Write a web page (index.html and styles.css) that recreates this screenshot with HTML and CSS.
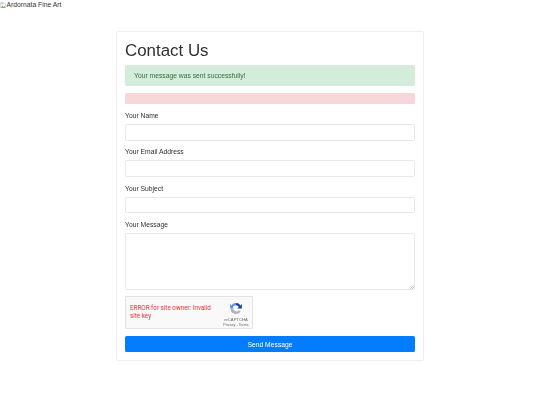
FILE: index.html
```html
<!DOCTYPE html>
<html lang="en">
<head>
<meta charset="utf-8">
<title>Contact Us</title>
<link rel="stylesheet" href="styles.css">
</head>
<body>
<header class="logo">
  <svg class="broken" viewBox="0 0 16 16" aria-hidden="true"><path d="M1 1h9l4 4v10H1z" fill="#fff" stroke="#a9a9a9"/><path d="M2 14l4-5 3 3 2-2 2 4z" fill="#5a9e4b"/><path d="M2 2h7v4H2z" fill="#b9d3f2"/></svg>
  <span class="logo-alt">Ardornata Fine Art</span>
</header>
<main class="card">
  <h1>Contact Us</h1>
  <div class="alert success">Your message was sent successfully!</div>
  <div class="alert danger"></div>
  <form class="form">
    <div class="group">
      <label for="name">Your Name</label>
      <input id="name" type="text">
    </div>
    <div class="group">
      <label for="email">Your Email Address</label>
      <input id="email" type="text">
    </div>
    <div class="group">
      <label for="subject">Your Subject</label>
      <input id="subject" type="text">
    </div>
    <div class="group">
      <label for="message">Your Message</label>
      <textarea id="message"></textarea>
    </div>
    <div class="captcha">
      <p class="captcha-error">ERROR for site owner: Invalid site key</p>
      <div class="captcha-brand">
        <svg class="captcha-logo" viewBox="0 0 20 20" aria-hidden="true">
          <path d="M10 1.5a8.500 8.500 0 0 1 7 3.700L19 3v7h-7l2.400-2.400A5 5 0 0 0 10 5z" fill="#1c3aa9"/>
          <path d="M10 1.500A8.500 8.500 0 0 0 3 5.200L1 3v7h5.500L5 8a5 5 0 0 1 5-3z" fill="#4a90e2"/>
          <path d="M1.500 10a8.500 8.500 0 0 0 15.600 4.700L14.500 12.500A5 5 0 0 1 6 11.500V10z" fill="#b0b3b8"/>
        </svg>
        <span class="captcha-name">reCAPTCHA</span>
        <span class="captcha-links">Privacy - Terms</span>
      </div>
    </div>
    <button class="send" type="button">Send Message</button>
  </form>
</main>
</body>
</html>
```

FILE: styles.css
```css
* {
  box-sizing: border-box;
}

html, body {
  margin: 0;
  background: #fff;
}

body {
  font-family: "Liberation Sans", Arial, sans-serif;
  color: #212529;
  font-size: 6.750px;
  height: 405px;
  overflow: hidden;
}

.logo {
  display: flex;
  align-items: center;
  height: 10px;
  line-height: 10px;
  color: #333;
}

.logo-alt {
  opacity: 0.99;
}

.broken {
  width: 6.500px;
  height: 6.500px;
  flex: none;
}

.card {
  width: 308px;
  height: 330px;
  margin: 21px 0 0 116px;
  padding: 8px;
  border: 1px solid #efefef;
  border-radius: 2px;
  display: flex;
  flex-direction: column;
  opacity: 0.99;
}

.card > * {
  flex: none;
}

h1 {
  margin: 0;
  height: 25px;
  font-size: 16.900px;
  line-height: 22px;
  font-weight: 400;
  color: #2b2f33;
}

.alert {
  border-radius: 1.500px;
}

.success {
  height: 21px;
  margin-bottom: 7px;
  padding-left: 9px;
  line-height: 21px;
  background: #d4edda;
  color: #2f6b3e;
}

.danger {
  height: 10.500px;
  margin-bottom: 7.500px;
  background: #f8d7da;
}

.form {
  display: flex;
  flex-direction: column;
}

.group {
  display: flex;
  flex-direction: column;
  margin-bottom: 6.750px;
}

label {
  height: 13px;
  line-height: 9px;
  color: #2b2f33;
}

input, textarea {
  display: block;
  width: 100%;
  height: 16.500px;
  padding: 0;
  border: 1px solid #e8e9eb;
  border-radius: 1.500px;
  background: #fff;
}

textarea {
  height: 57px;
}

textarea::-webkit-resizer {
  background: linear-gradient(135deg, transparent 55%, #c4c4c4 55%, #c4c4c4 65%, transparent 65%, transparent 78%, #c4c4c4 78%, #c4c4c4 88%, transparent 88%) right bottom / 5px 5px no-repeat;
}

.captcha {
  display: flex;
  justify-content: space-between;
  width: 128px;
  height: 33px;
  margin-top: -0.500px;
  background: #f9f9f9;
  border: 1px solid #e3e3e3;
  border-radius: 1px;
}

.captcha-error {
  margin: 8px 0 0 4px;
  width: 84px;
  font-family: Roboto, "Liberation Sans", sans-serif;
  font-size: 6.300px;
  line-height: 7.500px;
  color: #e0323a;
}

.captcha-brand {
  width: 32px;
  display: flex;
  flex-direction: column;
  align-items: center;
  padding-top: 5px;
  color: #666;
}

.captcha-logo {
  width: 14px;
  height: 14px;
}

.captcha-name {
  margin-top: 2px;
  font-size: 4.200px;
  line-height: 5px;
}

.captcha-links {
  margin-top: 1px;
  font-size: 3.700px;
  line-height: 5px;
}

.send {
  height: 16px;
  margin-top: 7px;
  padding: 0;
  border: 0;
  border-radius: 1.500px;
  background: #007bff;
  color: #fff;
  font: 6.750px "Liberation Sans", Arial, sans-serif;
}
```
